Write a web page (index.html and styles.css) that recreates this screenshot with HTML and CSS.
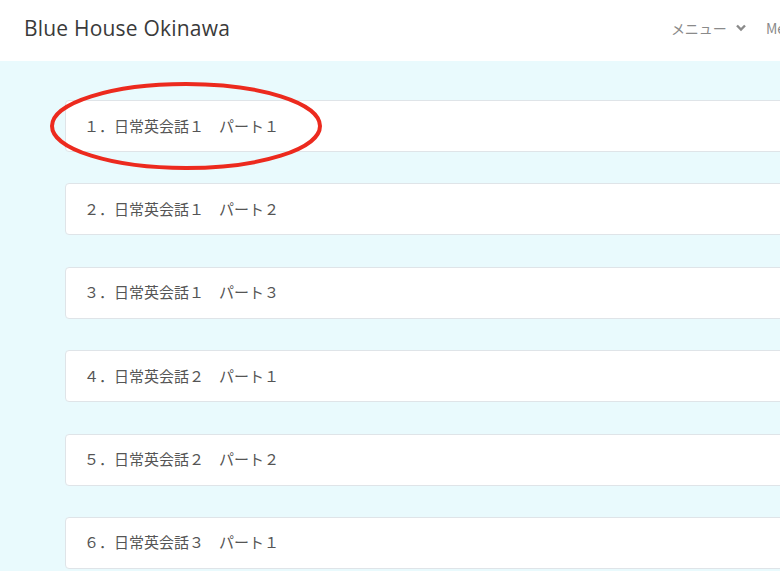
FILE: index.html
```html
<!DOCTYPE html>
<html lang="ja">
<head>
<meta charset="utf-8">
<title>Blue House Okinawa</title>
<link rel="stylesheet" href="styles.css">
</head>
<body>
<header class="site-header">
  <div class="brand">Blue House Okinawa</div>
  <nav class="nav">
    <span class="nav-item">メニュー <svg class="chev" viewBox="0 0 10 8" width="10" height="8"><path d="M1 1.5 L5 5.5 L9 1.5" fill="none" stroke="#8a8a8a" stroke-width="2.4"/></svg></span>
    <span class="nav-item">Me</span>
  </nav>
</header>
<main class="content">
  <ul class="list">
    <li class="card">１．日常英会話１　パート１</li>
    <li class="card">２．日常英会話１　パート２</li>
    <li class="card">３．日常英会話１　パート３</li>
    <li class="card">４．日常英会話２　パート１</li>
    <li class="card">５．日常英会話２　パート２</li>
    <li class="card">６．日常英会話３　パート１</li>
  </ul>
  <svg class="highlight" width="276" height="92" viewBox="0 0 276 92"><ellipse cx="138" cy="45" rx="134" ry="42" fill="none" stroke="#ec2a1e" stroke-width="4"/></svg>
</main>
</body>
</html>
```
FILE: styles.css
```css
html, body {
  margin: 0;
  padding: 0;
  overflow: hidden;
}
body {
  width: 780px;
  height: 571px;
  background: #e9fafd;
  font-family: "Noto Sans CJK JP", "Noto Sans", sans-serif;
}
.site-header {
  height: 61px;
  background: #ffffff;
  display: flex;
  align-items: center;
  justify-content: space-between;
  padding: 0 0 0 24px;
  overflow: hidden;
}
.brand {
  font-family: "Open Sans", "DejaVu Sans", sans-serif;
  font-size: 21px;
  color: #3a3a3a;
  letter-spacing: 0.2px;
  margin-top: -5px;
}
.nav {
  display: flex;
  align-items: center;
  gap: 20px;
  margin-right: -5px;
  margin-top: -5px;
  font-size: 14px;
  color: #8a8a8a;
}
.nav-item {
  display: flex;
  align-items: center;
  gap: 9px;
}
.content {
  position: relative;
  padding: 39px 0 0 65px;
}
.list {
  list-style: none;
  margin: 0;
  padding: 0;
  width: 900px;
  display: flex;
  flex-direction: column;
  gap: 31.4px;
}
.card {
  box-sizing: border-box;
  height: 52px;
  background: #ffffff;
  border: 1px solid #dfe4e8;
  border-radius: 4px;
  display: flex;
  align-items: center;
  padding: 0 0 2px 18px;
  font-size: 15px;
  color: #555555;
}
.highlight {
  position: absolute;
  left: 48px;
  top: 20px;
}
```
